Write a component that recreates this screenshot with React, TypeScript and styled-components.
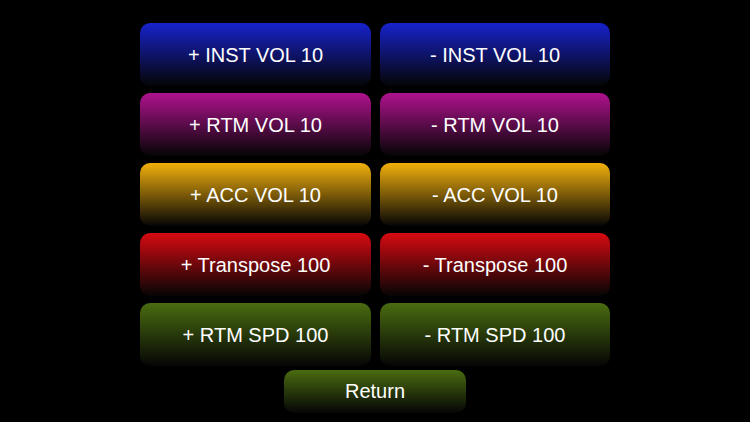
import React from 'react';
import styled, { createGlobalStyle } from 'styled-components';

const GlobalStyle = createGlobalStyle`
  html, body {
    margin: 0;
    padding: 0;
    background: #000;
  }
  body {
    font-family: "Liberation Sans", Arial, sans-serif;
  }
`;

interface ButtonProps {
    $color: string;
}

const Screen = styled.div`
  width: 750px;
  height: 422px;
  background: #000;
  display: flex;
  flex-direction: column;
  align-items: center;
  padding-top: 23px;
  box-sizing: border-box;
`;

const Grid = styled.div`
  display: grid;
  grid-template-columns: 231px 230px;
  grid-auto-rows: 63px;
  column-gap: 9px;
  row-gap: 7px;
`;

const Button = styled.div<ButtonProps>`
  display: flex;
  align-items: center;
  justify-content: center;
  border-radius: 10px;
  color: #fff;
  font-size: 20px;
  padding-top: 2px;
  box-sizing: border-box;
  background: linear-gradient(to bottom, ${props => props.$color} 0%, #050505 100%);
  cursor: pointer;
`;

const ReturnButton = styled(Button)`
  width: 182px;
  height: 43px;
  margin-top: 4px;
  padding-top: 0;
`;

const rows = [
    { label: 'INST VOL 10', color: '#1722cc' },
    { label: 'RTM VOL 10', color: '#b0128e' },
    { label: 'ACC VOL 10', color: '#f2b00c' },
    { label: 'Transpose 100', color: '#d80a12' },
    { label: 'RTM SPD 100', color: '#4a6c10' },
];

const App = () => {
    return (
        <>
            <GlobalStyle />
            <Screen>
                <Grid>
                    {rows.map(row => (
                        <React.Fragment key={row.label}>
                            <Button $color={row.color}>+ {row.label}</Button>
                            <Button $color={row.color}>- {row.label}</Button>
                        </React.Fragment>
                    ))}
                </Grid>
                <ReturnButton $color="#4a6c10">Return</ReturnButton>
            </Screen>
        </>
    );
}

export default App;
